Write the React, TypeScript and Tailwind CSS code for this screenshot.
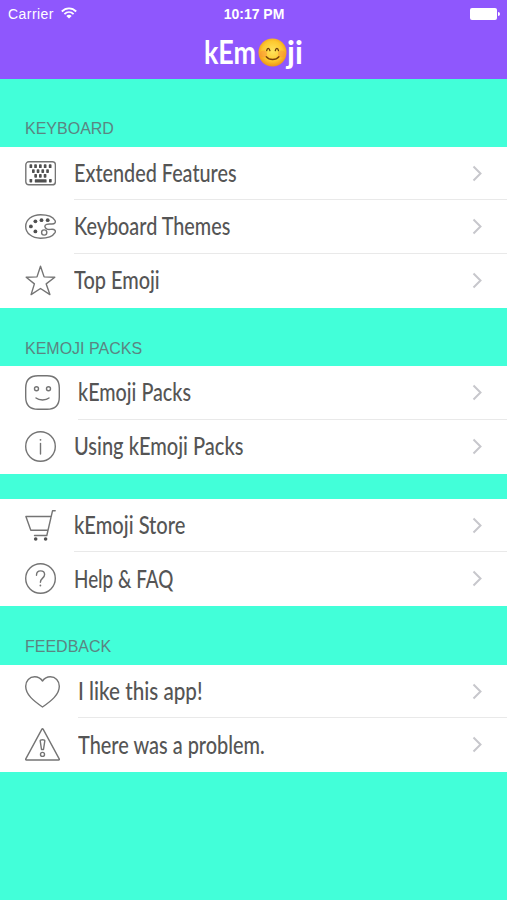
import type { ReactNode } from "react";

type Row = {
    label: string;
    icon: ReactNode;
    stretch: string;
};

type Section = {
    title?: string;
    heading: string;
    body: string;
    rows: Row[];
};

const stroke = {
    fill: "none",
    stroke: "#747474",
    strokeWidth: 1.4,
    strokeLinejoin: "round" as const,
    strokeLinecap: "round" as const,
};

const KeyboardIcon = () => (
    <svg width="31" height="25" viewBox="0 0 31 25" {...stroke}>
        <rect x="0.8" y="0.8" width="29.6" height="23" rx="3" />
        <g fill="#505050" stroke="none">
            {[4.5, 9.2, 14, 18.8, 23.8].map((x) => (
                <rect key={x} x={x} y="3.3" width="2.7" height="3.8" rx="0.7" />
            ))}
            {[7, 11.7, 16.4, 21.2].map((x) => (
                <rect key={x} x={x} y="8.2" width="2.7" height="3.8" rx="0.7" />
            ))}
            {[9.3, 14, 18.7].map((x) => (
                <rect key={x} x={x} y="13" width="2.7" height="3.8" rx="0.7" />
            ))}
            <rect x="4.5" y="17.9" width="2.7" height="3.6" rx="0.7" />
            <rect x="9.8" y="18.3" width="11.8" height="3.2" rx="0.6" />
            <rect x="24" y="17.9" width="2.7" height="3.6" rx="0.7" />
        </g>
    </svg>
);

const PaletteIcon = () => (
    <svg width="31" height="25" viewBox="0 0 31 25" {...stroke}>
        <path d="M30 6.500C28 2.800 22 .7 15.500.7 7 .7.7 5.800.7 12.400S7 24.200 15.500 24.200c6.700 0 12.500-2.200 14.500-5.600 1-1.900-.4-3.300-2.800-3.300-2.500 0-3.800.5-5.200-.2-2.500-1.100-3-3.900-.3-4.800 1.500-.5 3.200-.2 5.300-.3 2.700-.1 4-1.600 3-3.500z" />
        <circle cx="19.200" cy="18.500" r="2.600" />
        <g fill="#505050" stroke="none">
            <circle cx="5.900" cy="12.400" r="1.900" />
            <circle cx="10.400" cy="7.300" r="1.900" />
            <circle cx="16.500" cy="6.200" r="1.900" />
            <circle cx="22.700" cy="6.200" r="1.900" />
            <circle cx="10.400" cy="17.400" r="1.900" />
        </g>
    </svg>
);

const StarIcon = () => (
    <svg width="31" height="31" viewBox="0 0 31 31" {...stroke}>
        <path d="M15.500 1.200 19.100 11.900 29.800 12.200 21.200 18.900 24.900 29.600 15.500 23.500 6.100 29.600 9.400 18.900 1.200 12.200 12 11.900z" />
    </svg>
);

const SmileIcon = () => (
    <svg width="35" height="35" viewBox="0 0 35 35" {...stroke}>
        <path d="M13 .7h9C30.500.7 34.300 4.500 34.300 13v9c0 8.500-3.800 12.300-12.300 12.300h-9C4.500 34.300.7 30.500.7 22v-9C.7 4.500 4.500.7 13 .7z" />
        <circle cx="11.500" cy="13.700" r="2" />
        <circle cx="23.500" cy="13.700" r="2" />
        <path d="M11 23c3 2.600 10 2.600 13 0" />
    </svg>
);

const InfoIcon = () => (
    <svg width="31" height="31" viewBox="0 0 31 31" {...stroke}>
        <circle cx="15.500" cy="15.500" r="14.800" />
        <path d="M15.500 12.500v10.500" />
        <circle cx="15.500" cy="8.800" r="0.900" fill="#747474" stroke="none" />
    </svg>
);

const CartIcon = () => (
    <svg width="31" height="31" viewBox="0 0 31 31" {...stroke}>
        <path d="M30.200.8h-2.700L21.800 25.500H9.500M26.300 6.500H.9l4.900 13.800h17.300" />
        <circle cx="10.700" cy="29" r="1.800" fill="#505050" stroke="none" />
        <circle cx="20.600" cy="29" r="1.800" fill="#505050" stroke="none" />
    </svg>
);

const HelpIcon = () => (
    <svg width="31" height="31" viewBox="0 0 31 31" {...stroke}>
        <circle cx="15.500" cy="15.500" r="14.800" />
        <path d="M11.500 12.200c0-2.600 1.600-4.300 4.100-4.300 2.300 0 4 1.500 4 3.600 0 3.600-4.200 3.700-4.200 7.800" />
        <circle cx="15.400" cy="22.500" r="0.900" fill="#747474" stroke="none" />
    </svg>
);

const HeartIcon = () => (
    <svg width="35" height="32" viewBox="0 0 35 32" {...stroke}>
        <path d="M17.500 5C15.500 2 12.800.7 9.700.7 4.500.7.7 4.700.7 10.300c0 8.200 7.700 14.500 16.800 20.700 9.100-6.200 16.800-12.500 16.800-20.700 0-5.600-3.800-9.600-9-9.600-3.100 0-5.800 1.300-7.800 4.300z" />
    </svg>
);

const WarningIcon = () => (
    <svg width="35" height="33" viewBox="0 0 35 33" {...stroke}>
        <path d="M16.900 1.200.8 30.800c-.3.700-.1 1.200.6 1.200h32.200c.7 0 .9-.5.6-1.200L18.100 1.200c-.3-.6-.9-.6-1.200 0z" />
        <path d="M15.200 12.800c0-1.500 4.600-1.500 4.600 0l-1.300 8.700h-2z" />
        <circle cx="17.500" cy="26.400" r="2" />
    </svg>
);

const sections: Section[] = [
    {
        title: "KEYBOARD",
        heading: "h-[68px] pb-[9px]",
        body: "h-[161px]",
        rows: [
            { label: "Extended Features", icon: <KeyboardIcon />, stretch: "scale-x-[0.825]" },
            { label: "Keyboard Themes", icon: <PaletteIcon />, stretch: "scale-x-[0.825]" },
            { label: "Top Emoji", icon: <StarIcon />, stretch: "scale-x-[0.83]" },
        ],
    },
    {
        title: "KEMOJI PACKS",
        heading: "h-[58px] pb-[8px]",
        body: "h-[108px]",
        rows: [
            { label: "kEmoji Packs", icon: <SmileIcon />, stretch: "scale-x-[0.822]" },
            { label: "Using kEmoji Packs", icon: <InfoIcon />, stretch: "scale-x-[0.835]" },
        ],
    },
    {
        heading: "h-[25px]",
        body: "h-[107px]",
        rows: [
            { label: "kEmoji Store", icon: <CartIcon />, stretch: "scale-x-[0.838]" },
            { label: "Help & FAQ", icon: <HelpIcon />, stretch: "scale-x-[0.785]" },
        ],
    },
    {
        title: "FEEDBACK",
        heading: "h-[59px] pb-[9px]",
        body: "h-[107px]",
        rows: [
            { label: "I like this app!", icon: <HeartIcon />, stretch: "scale-x-[0.86]" },
            { label: "There was a problem.", icon: <WarningIcon />, stretch: "scale-x-[0.83]" },
        ],
    },
];

function Blush() {
    return (
        <svg width="29" height="29" viewBox="0 0 29 29" fill="none" strokeLinecap="round">
            <defs>
                <radialGradient id="face" cx="0.5" cy="0.45" r="0.55">
                    <stop offset="0" stopColor="#ffe45c" />
                    <stop offset="0.65" stopColor="#fdc82f" />
                    <stop offset="1" stopColor="#ee9417" />
                </radialGradient>
            </defs>
            <circle cx="14.500" cy="14.500" r="14" fill="url(#face)" />
            <circle cx="5.500" cy="16" r="3.500" fill="#f98a3c" opacity="0.45" />
            <circle cx="23.500" cy="16" r="3.500" fill="#f98a3c" opacity="0.45" />
            <path d="M8.700 12.700c.5-3.200 2.500-3.200 3.200 0M17.300 12.700c.6-3.200 2.600-3.200 3.200 0" stroke="#6a3b0c" strokeWidth="1.300" />
            <path d="M8.300 18.700c3 3.700 9.600 3.700 12.600 0" stroke="#7a420c" strokeWidth="1.400" />
        </svg>
    );
}

function Header() {
    return (
        <header className="h-[79px] bg-[#8f57fd] text-white">
            <div className="grid h-[27px] grid-cols-3 items-center pl-2 pr-[7px] pt-px font-['Liberation_Sans',sans-serif] text-[14px]">
                <div className="flex items-center gap-[7px]">
                    <span className="tracking-[0.45px]">Carrier</span>
                    <svg className="-mt-[3px]" width="16" height="12" viewBox="0 0 16 12" fill="none" stroke="white" strokeWidth="1.800">
                        <path d="M.8 4.500c4.200-4.200 10.200-4.200 14.400 0M3.400 7.200c2.700-2.700 6.500-2.700 9.200 0" />
                        <path d="M5.300 8.900c1.600-1.500 3.800-1.500 5.400 0L8 11.600z" fill="white" stroke="none" />
                    </svg>
                </div>
                <span className="text-center font-bold">10:17 PM</span>
                <div className="-mt-px flex items-center justify-end gap-px">
                    <span className="h-3 w-[27px] rounded-[2px] bg-white" />
                    <span className="h-1 w-[2px] rounded-r-full bg-white" />
                </div>
            </div>
            <h1 className="flex h-[50px] items-center justify-center pl-[4px] font-['Lato',sans-serif] text-[32px] font-bold leading-none">
                <span className="flex w-[52px] justify-end pr-[2px]">
                    <span className="origin-right scale-x-[0.84]">kEm</span>
                </span>
                <Blush />
                <span className="w-[19px]">
                    <span className="inline-block origin-left scale-x-[0.97]">ji</span>
                </span>
            </h1>
        </header>
    );
}

function MenuRow({ row, last }: { row: Row; last: boolean }) {
    return (
        <div className={`flex flex-1 items-center gap-[18px] pl-[25px] ${last ? "pb-px" : ""}`}>
            {row.icon}
            <div className={`flex flex-1 items-center justify-between self-stretch pr-6 ${last ? "" : "border-b border-[#e9e9e9]"}`}>
                <span className={`origin-left whitespace-nowrap font-['Lato',sans-serif] text-[24px] font-medium text-[#555] ${row.stretch}`}>
                    {row.label}
                </span>
                <svg width="11" height="17" viewBox="0 0 11 17" fill="none" stroke="#c7c7cc" strokeWidth="2">
                    <path d="m1.500 1.500 7 7-7 7" />
                </svg>
            </div>
        </div>
    );
}

export default function App() {
    return (
        <div className="h-[900px] w-[507px] overflow-hidden bg-[#42ffd9]">
            <Header />
            {sections.map((section) => (
                <section key={section.rows[0].label}>
                    <h2 className={`flex items-end pl-[25px] font-['Liberation_Sans',sans-serif] text-[16px] leading-[18px] text-[#5b8582] ${section.heading}`}>
                        {section.title}
                    </h2>
                    <div className={`flex flex-col bg-white ${section.body}`}>
                        {section.rows.map((row, i) => (
                            <MenuRow key={row.label} row={row} last={i === section.rows.length - 1} />
                        ))}
                    </div>
                </section>
            ))}
        </div>
    );
}
